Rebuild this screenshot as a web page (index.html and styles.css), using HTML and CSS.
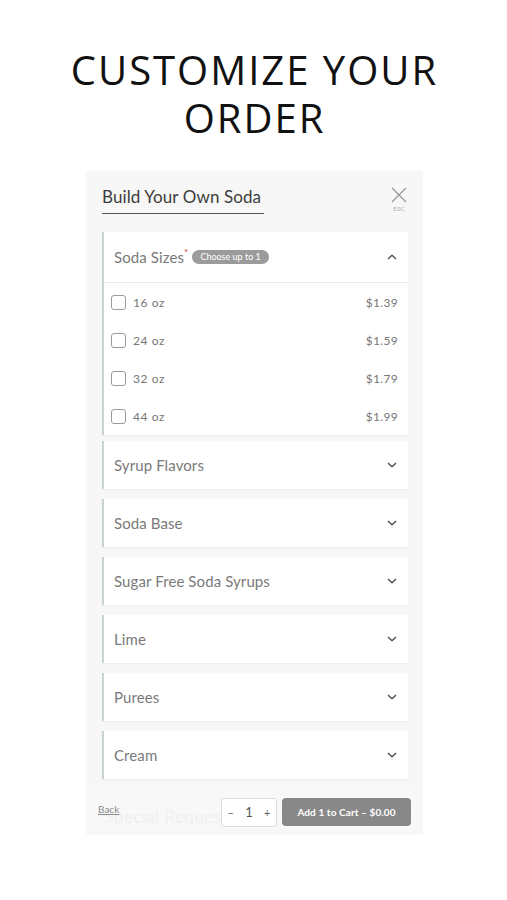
FILE: index.html
```html
<!DOCTYPE html>
<html>
<head>
<meta charset="utf-8">
<link rel="stylesheet" href="styles.css">
</head>
<body>
<h1 class="page-title"><span class="tline">CUSTOMIZE YOUR</span><span class="tline">ORDER</span></h1>
<div class="panel">
  <div class="panel-scroll">
    <div class="panel-head">
      <div class="item-title">Build Your Own Soda</div>
      <div class="close">
        <svg width="16" height="16" viewBox="0 0 16 16"><path d="M1 1L15 15M15 1L1 15" stroke="#9a9a9a" stroke-width="1.4" fill="none"/></svg>
        <span class="esc">ESC</span>
      </div>
    </div>

    <div class="card open">
      <div class="card-head">
        <span class="card-name">Soda Sizes<sup class="req">*</sup></span>
        <span class="badge">Choose up to 1</span>
        <svg class="chev" width="10" height="6" viewBox="0 0 10 6"><path d="M1 5L5 1.2L9 5" stroke="#555" stroke-width="1.5" fill="none"/></svg>
      </div>
      <div class="opt"><span class="box"></span><span class="opt-label">16 oz</span><span class="price">$1.39</span></div>
      <div class="opt"><span class="box"></span><span class="opt-label">24 oz</span><span class="price">$1.59</span></div>
      <div class="opt"><span class="box"></span><span class="opt-label">32 oz</span><span class="price">$1.79</span></div>
      <div class="opt"><span class="box"></span><span class="opt-label">44 oz</span><span class="price">$1.99</span></div>
    </div>

    <div class="card"><div class="card-head"><span class="card-name">Syrup Flavors</span><svg class="chev" width="10" height="6" viewBox="0 0 10 6"><path d="M1 1L5 4.8L9 1" stroke="#555" stroke-width="1.5" fill="none"/></svg></div></div>
    <div class="card"><div class="card-head"><span class="card-name">Soda Base</span><svg class="chev" width="10" height="6" viewBox="0 0 10 6"><path d="M1 1L5 4.8L9 1" stroke="#555" stroke-width="1.5" fill="none"/></svg></div></div>
    <div class="card"><div class="card-head"><span class="card-name">Sugar Free Soda Syrups</span><svg class="chev" width="10" height="6" viewBox="0 0 10 6"><path d="M1 1L5 4.8L9 1" stroke="#555" stroke-width="1.5" fill="none"/></svg></div></div>
    <div class="card"><div class="card-head"><span class="card-name">Lime</span><svg class="chev" width="10" height="6" viewBox="0 0 10 6"><path d="M1 1L5 4.8L9 1" stroke="#555" stroke-width="1.5" fill="none"/></svg></div></div>
    <div class="card"><div class="card-head"><span class="card-name">Purees</span><svg class="chev" width="10" height="6" viewBox="0 0 10 6"><path d="M1 1L5 4.8L9 1" stroke="#555" stroke-width="1.5" fill="none"/></svg></div></div>
    <div class="card"><div class="card-head"><span class="card-name">Cream</span><svg class="chev" width="10" height="6" viewBox="0 0 10 6"><path d="M1 1L5 4.8L9 1" stroke="#555" stroke-width="1.5" fill="none"/></svg></div></div>

    <div class="special">Special Requests</div>
  </div>

  <div class="footer">
    <a class="back">Back</a>
    <div class="qty"><span class="qbtn">–</span><span class="qnum">1</span><span class="qbtn">+</span></div>
    <div class="add">Add 1 to Cart – $0.00</div>
  </div>
</div>
</body>
</html>
```

FILE: styles.css
```css
html, body {
  margin: 0;
  padding: 0;
  background: #fff;
}
body {
  width: 507px;
  height: 900px;
  overflow: hidden;
  font-family: Lato, "Noto Sans", sans-serif;
}
.page-title {
  margin: 0;
  padding-top: 48px;
  font-family: "Open Sans", sans-serif;
  font-weight: 400;
  font-size: 40px;
  letter-spacing: 2px;
  text-align: center;
  color: #111;
  padding-left: 2px;
  display: flex;
  flex-direction: column;
  align-items: center;
}
.tline {
  display: block;
  height: 48px;
  line-height: 44px;
  overflow: visible;
}
.panel {
  position: relative;
  margin: 27px 0 0 86px;
  width: 337px;
  height: 664px;
  background: #f7f7f7;
  overflow: hidden;
}
.panel-scroll {
  padding: 0 15px 0 16px;
}
.panel-head {
  display: flex;
  justify-content: space-between;
  align-items: flex-start;
  padding-top: 16px;
  height: 45px;
}
.item-title {
  font-size: 17px;
  color: #3d3d3d;
  padding-bottom: 6px;
  border-bottom: 1.5px solid #555;
  line-height: 20px;
  width: 162px;
  letter-spacing: 0.1px;
}
.close {
  display: flex;
  flex-direction: column;
  align-items: center;
  margin-right: -1px;
  width: 20px;
}
.esc {
  font-size: 6px;
  color: #aaa;
  margin-top: 2px;
  letter-spacing: 0.3px;
}
.card {
  background: #fff;
  border-left: 2px solid #c7d4d0;
  margin-bottom: 10px;
  box-shadow: 0 1px 1px rgba(0,0,0,0.03);
}
.card.open {
  margin-bottom: 6px;
}
.card-head {
  height: 48px;
  display: flex;
  align-items: center;
  padding: 0 10px 0 10px;
}
.open .card-head {
  height: 50px;
  border-bottom: 1px solid #ececec;
}
.card-name {
  font-size: 15px;
  color: #7a7a7a;
  letter-spacing: 0.1px;
}
.req {
  color: #d63b3b;
  font-size: 10px;
  vertical-align: top;
  line-height: 10px;
  position: relative;
  top: -1px;
}
.badge {
  margin-left: 4px;
  background: #9b9b9b;
  color: #fff;
  font-size: 9px;
  border-radius: 8px;
  padding: 2px 8px;
  line-height: 10px;
}
.chev {
  margin-left: auto;
  margin-right: 1px;
}
.opt {
  height: 38px;
  display: flex;
  align-items: center;
  padding: 0 10px 0 7px;
}
.box {
  border: 1.3px solid #999;
  border-radius: 3px;
  box-sizing: border-box;
  width: 15px;
  height: 15px;
}
.opt-label {
  margin-left: 7px;
  font-size: 12px;
  color: #777;
  letter-spacing: 0.6px;
}
.price {
  margin-left: auto;
  font-size: 12px;
  color: #777;
  letter-spacing: 0.3px;
}
.special {
  font-size: 18px;
  color: #aaa;
  padding: 16px 0 0 2px;
}
.footer {
  position: absolute;
  left: 0;
  right: 0;
  bottom: 0;
  height: 50px;
  background: rgba(247,247,247,0.9);
  display: flex;
  align-items: center;
  padding: 4px 12px 0 12px;
  box-sizing: border-box;
}
.back {
  font-size: 10px;
  color: #888;
  text-decoration: underline;
  margin-top: -6px;
}
.qty {
  margin-left: auto;
  width: 56px;
  height: 29px;
  box-sizing: border-box;
  background: #fff;
  border: 1px solid #ddd;
  border-radius: 3px;
  display: flex;
  align-items: center;
  justify-content: space-around;
  font-size: 12px;
  color: #555;
}
.qbtn { font-size: 11px; color: #666; }
.qnum { font-size: 13px; }
.add {
  margin-left: 5px;
  width: 129px;
  height: 28px;
  background: #888;
  color: #fff;
  border-radius: 4px;
  font-size: 10px;
  font-weight: 700;
  display: flex;
  align-items: center;
  justify-content: center;
  letter-spacing: 0.1px;
}
```
